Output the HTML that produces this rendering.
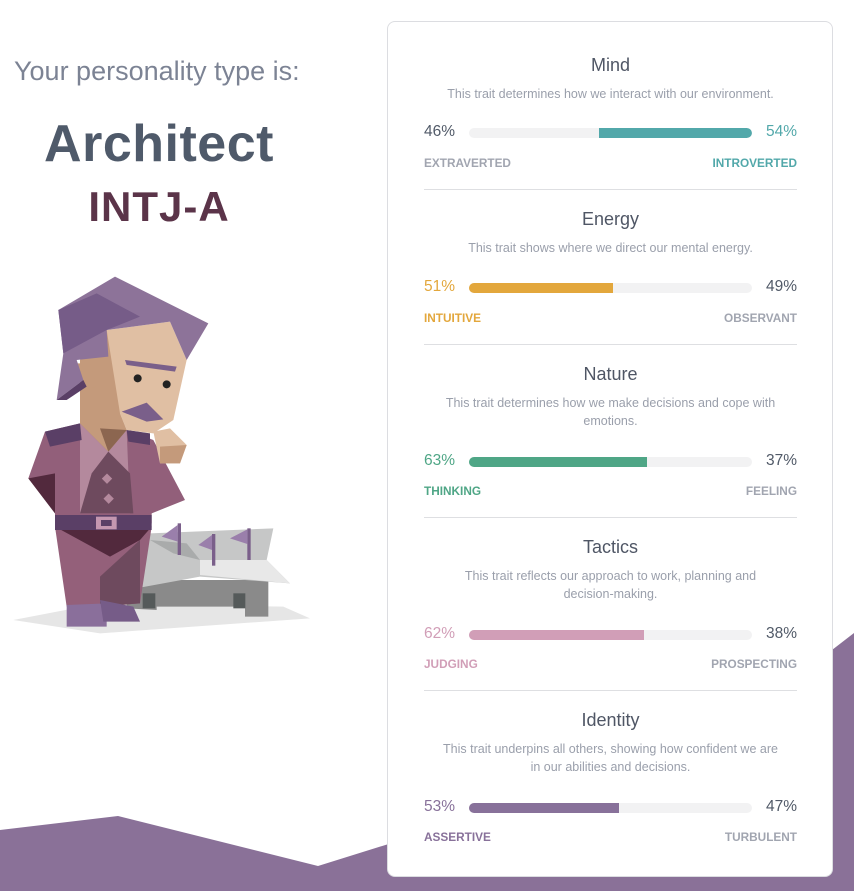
<!DOCTYPE html>
<html><head><meta charset="utf-8"><style>
*{margin:0;padding:0;box-sizing:border-box}
body{width:854px;height:891px;position:relative;overflow:hidden;background:#fff;font-family:"Liberation Sans",sans-serif}
.bg{position:absolute;left:0;top:0}
.intro{position:absolute;left:14px;top:56px;font-size:27px;color:#7c8394}
.arch{position:absolute;left:0;width:318px;text-align:center;top:114px;font-size:52px;font-weight:bold;color:#4f5a6a;letter-spacing:0.5px}
.code{position:absolute;left:0;width:318px;text-align:center;top:183px;font-size:42px;font-weight:bold;color:#5b3449;letter-spacing:1px}
.card{position:absolute;left:387px;top:21px;width:446px;height:856px;background:#fff;border:1px solid #dcdde1;border-radius:8px}
.sec{position:absolute;left:36px;width:373px;text-align:center}
.t{font-size:18px;color:#4f5665}
.d{font-size:12.5px;color:#9a9fab;line-height:18px;margin-left:auto;margin-right:auto;max-width:350px}
.row{position:absolute;left:36px;width:373px;height:20px}
.pl,.pr{position:absolute;top:0;font-size:15.5px;color:#515a68}
.pl{left:0}.pr{right:0}
.bar{position:absolute;left:45px;width:283px;top:5px;height:10px;background:#f2f2f3;border-radius:5px;overflow:hidden}
.fill{position:absolute;top:0;height:10px}
.lab{position:absolute;left:36px;width:373px;font-size:11.8px;font-weight:bold;color:#a1a5b0}
.lab span:last-child{float:right}
.hr{position:absolute;left:36px;width:373px;height:1px;background:#dedfe2}
</style></head><body>
<svg class="bg" width="854" height="891">
<polygon points="0,830 118,816 318,866 395,842 832,650 854,633 854,891 0,891" fill="#8a7198"/>
</svg>
<div class="intro">Your personality type is:</div>
<div class="arch">Architect</div>
<div class="code">INTJ-A</div>
<svg style="position:absolute;left:0;top:260px" width="320" height="380" viewBox="0 0 960 1140">
<polygon points="40,1080 300,1030 850,1040 930,1075 300,1120" fill="#e6e6e6"/>
<polygon points="380,960 805,960 805,1070 735,1070 735,1040 470,1040 470,1050 380,1045" fill="#8a8a8a"/>
<rect x="428" y="1000" width="38" height="45" fill="#555a5a"/>
<rect x="700" y="1000" width="36" height="45" fill="#555a5a"/>
<polygon points="450,820 820,805 800,900 870,970 600,950 380,990" fill="#c6c7c7"/>
<polygon points="600,900 800,900 870,970 600,945" fill="#e8e8e8"/>
<polygon points="450,840 560,850 600,900 520,880" fill="#a9abab"/>
<rect x="533" y="790" width="10" height="95" fill="#7a5f8a"/><polygon points="533,795 485,830 533,845" fill="#9a7fab"/>
<rect x="636" y="822" width="10" height="95" fill="#7a5f8a"/><polygon points="636,825 595,855 636,870" fill="#9a7fab"/>
<rect x="742" y="805" width="10" height="95" fill="#7a5f8a"/><polygon points="742,808 690,835 742,852" fill="#9a7fab"/>
<polygon points="165,800 455,800 420,1030 300,1040 200,1040" fill="#94607a"/>
<polygon points="165,800 455,800 420,840 330,890" fill="#52293d"/>
<polygon points="300,950 420,840 420,1030 300,1040" fill="#6e4a5e"/>
<polygon points="200,1035 320,1030 320,1100 200,1100" fill="#8a6f9b"/>
<polygon points="300,1020 400,1040 420,1085 310,1085" fill="#765c88"/>
<polygon points="135,515 240,490 380,510 460,540 555,720 455,760 455,790 165,790 165,760 85,655" fill="#925f7a"/>
<polygon points="85,655 165,640 165,760" fill="#52293d"/>
<polygon points="240,490 325,575 380,510 390,760 240,760" fill="#b4899d"/>
<polygon points="325,575 390,640 400,760 240,760 275,640" fill="#6e4a5e"/>
<polygon points="135,515 240,490 245,540 150,560" fill="#5a3f66"/>
<polygon points="380,510 450,520 450,555 385,545" fill="#5a3f66"/>
<rect x="310" y="645" width="22" height="22" fill="#b4899d" transform="rotate(45 321 656)"/>
<rect x="315" y="705" width="22" height="22" fill="#b4899d" transform="rotate(45 326 716)"/>
<rect x="165" y="765" width="290" height="45" fill="#5a3f66"/>
<rect x="288" y="770" width="62" height="38" fill="#c497b0"/><rect x="303" y="780" width="32" height="18" fill="#5a3f66"/>
<polygon points="320,210 510,185 560,300 520,480 460,520 380,510 360,460 290,500 240,480 240,300" fill="#e0bfa3"/>
<polygon points="240,300 320,210 360,460 380,510 325,575 240,490" fill="#c49a7b"/>
<polygon points="300,505 380,510 325,575" fill="#8c6650"/>
<polygon points="225,310 270,310 290,380 245,390" fill="#c49a7b"/>
<polygon points="175,150 345,50 625,190 560,300 510,185 320,210 325,290 230,300 250,360 170,420 190,280" fill="#8d7399"/>
<polygon points="175,150 290,100 420,170 320,210 190,280" fill="#765c88"/>
<polygon points="170,420 250,360 260,380 200,420" fill="#5a3f66"/>
<polygon points="375,300 530,320 525,335 380,315" fill="#7a5f8a"/>
<circle cx="413" cy="355" r="12" fill="#222"/><circle cx="500" cy="373" r="12" fill="#222"/>
<polygon points="365,455 440,428 490,478 440,485" fill="#7a5f8a"/>
<polygon points="460,515 510,505 560,555 540,610 480,610" fill="#e0bfa3"/>
<polygon points="480,560 560,555 540,610 480,610" fill="#c49a7b"/>
</svg>
<div class="card">
 <div class="sec" style="top:33px"><div class="t">Mind</div><div class="d" style="margin-top:9px;max-width:none">This trait determines how we interact with our environment.</div></div>
 <div class="row" style="top:101px"><span class="pl">46%</span><div class="bar"><div class="fill" style="left:130px;width:153px;background:#52a8aa;border-radius:0 5px 5px 0"></div></div><span class="pr" style="color:#52a8aa">54%</span></div>
 <div class="lab" style="top:134px"><span>EXTRAVERTED</span><span style="color:#52a8aa">INTROVERTED</span></div>
 <div class="hr" style="top:167px"></div>

 <div class="sec" style="top:187px"><div class="t">Energy</div><div class="d" style="margin-top:9px">This trait shows where we direct our mental energy.</div></div>
 <div class="row" style="top:256px"><span class="pl" style="color:#e3a73c">51%</span><div class="bar"><div class="fill" style="left:0;width:144px;background:#e3a73c"></div></div><span class="pr">49%</span></div>
 <div class="lab" style="top:289px"><span style="color:#e3a73c">INTUITIVE</span><span>OBSERVANT</span></div>
 <div class="hr" style="top:322px"></div>

 <div class="sec" style="top:342px"><div class="t">Nature</div><div class="d" style="margin-top:9px">This trait determines how we make decisions and cope with emotions.</div></div>
 <div class="row" style="top:430px"><span class="pl" style="color:#4fa686">63%</span><div class="bar"><div class="fill" style="left:0;width:178px;background:#4fa686"></div></div><span class="pr">37%</span></div>
 <div class="lab" style="top:462px"><span style="color:#4fa686">THINKING</span><span>FEELING</span></div>
 <div class="hr" style="top:495px"></div>

 <div class="sec" style="top:515px"><div class="t">Tactics</div><div class="d" style="margin-top:9px;max-width:330px">This trait reflects our approach to work, planning and decision-making.</div></div>
 <div class="row" style="top:603px"><span class="pl" style="color:#d19eb7">62%</span><div class="bar"><div class="fill" style="left:0;width:175px;background:#d19eb7"></div></div><span class="pr">38%</span></div>
 <div class="lab" style="top:635px"><span style="color:#d19eb7">JUDGING</span><span>PROSPECTING</span></div>
 <div class="hr" style="top:668px"></div>

 <div class="sec" style="top:688px"><div class="t">Identity</div><div class="d" style="margin-top:9px;max-width:345px">This trait underpins all others, showing how confident we are in our abilities and decisions.</div></div>
 <div class="row" style="top:776px"><span class="pl" style="color:#88719a">53%</span><div class="bar"><div class="fill" style="left:0;width:150px;background:#88719a"></div></div><span class="pr">47%</span></div>
 <div class="lab" style="top:808px"><span style="color:#88719a">ASSERTIVE</span><span>TURBULENT</span></div>
</div>
</body></html>
